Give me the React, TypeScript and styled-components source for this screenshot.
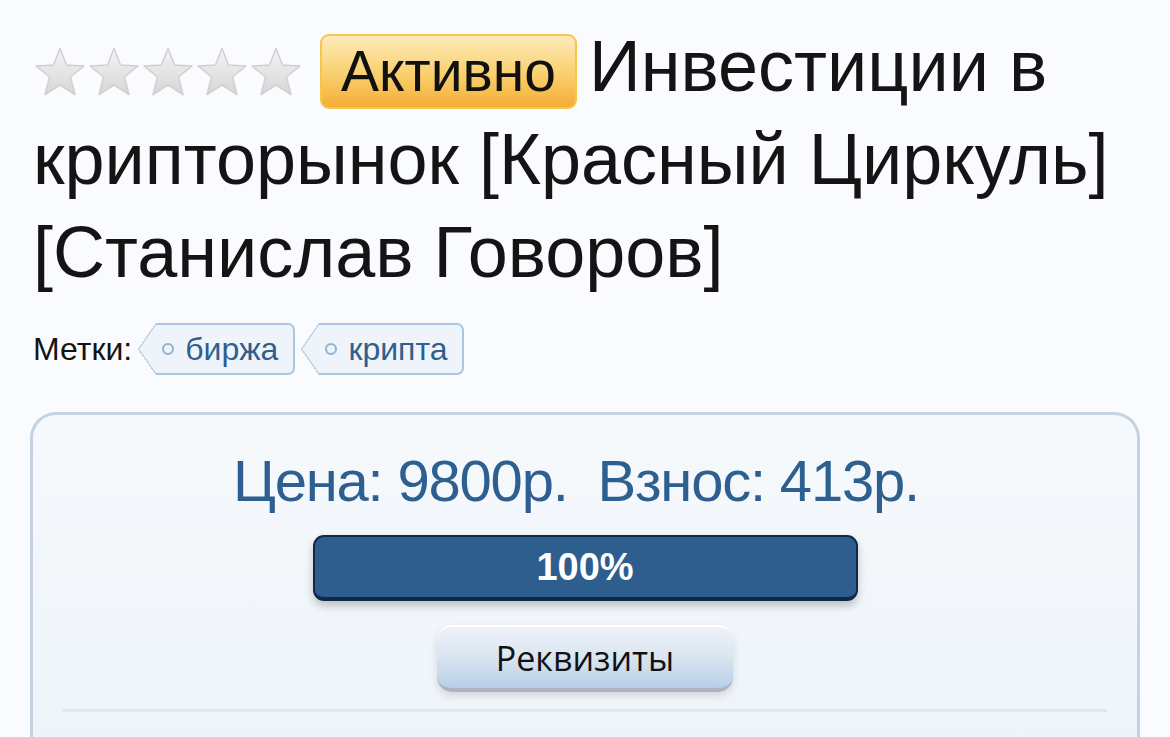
import styled, { createGlobalStyle } from 'styled-components';

const GlobalStyle = createGlobalStyle`
  html, body {
    margin: 0;
    padding: 0;
    background: #fafbfe;
  }
  body {
    font-family: 'Liberation Sans', Arial, sans-serif;
    color: #141414;
  }
`;

const Page = styled.div`
  padding: 20px 30px 0 33px;
`;

const Title = styled.h1`
  margin: 0;
  font-size: 72px;
  font-weight: normal;
  line-height: 93px;
  color: #141414;
`;

const Stars = styled.span`
  display: inline-flex;
  vertical-align: -9px;
  margin-right: 17px;
  svg {
    width: 54px;
    height: 55px;
    filter: blur(0.6px);
  }
`;

const Badge = styled.span`
  display: inline-block;
  padding: 0 19px;
  height: 71px;
  line-height: 71px;
  font-size: 57px;
  border: 2px solid #f7c54a;
  border-radius: 9px;
  background: linear-gradient(#fdebbb, #f9cf6c 55%, #f4ae35);
  color: #111;
  margin-right: 12px;
`;

const TagRow = styled.div`
  display: flex;
  align-items: center;
  gap: 5px;
  margin-top: 24px;
  font-size: 32px;
`;

const Tag = styled.span`
  position: relative;
  display: inline-flex;
  align-items: center;
  height: 48px;
  padding: 0 15px 0 6px;
  margin-left: 19px;
  border: 2px solid #a9c7e3;
  border-left: none;
  border-radius: 0 7px 7px 0;
  background: #eef4fa;
  color: #2e5f8f;
  font-size: 32px;

  &::before {
    content: '';
    position: absolute;
    left: -18px;
    top: -2px;
    width: 18px;
    height: 52px;
    background: linear-gradient(to bottom right, transparent 49%, #a9c7e3 50%, #eef4fa 56%) top / 100% 50% no-repeat,
      linear-gradient(to top right, transparent 49%, #a9c7e3 50%, #eef4fa 56%) bottom / 100% 50% no-repeat;
  }

  &::after {
    content: '';
    width: 8px;
    height: 8px;
    border: 2px solid #8fb3d4;
    border-radius: 50%;
    margin-right: 11px;
    order: -1;
  }
`;

const Card = styled.section`
  margin-top: 37px;
  margin-left: -3px;
  border: 3px solid #c4d2e1;
  border-bottom: none;
  border-radius: 26px 26px 0 0;
  background: linear-gradient(#f6f9fc, #eef4f9);
  padding: 34px 30px 40px;
  display: flex;
  flex-direction: column;
  align-items: center;
`;

const Price = styled.div`
  margin-right: 18px;
  font-size: 58px;
  line-height: 64px;
  color: #2e5f91;
  letter-spacing: -1.2px;
  white-space: pre;
`;

const Progress = styled.div`
  margin-top: 22px;
  width: 541px;
  height: 60px;
  border: 2px solid #10294a;
  border-bottom-width: 4px;
  border-radius: 11px;
  background: #2e5e8e;
  color: #fff;
  font-weight: bold;
  font-size: 38px;
  display: flex;
  align-items: center;
  justify-content: center;
  box-shadow: 0 5px 8px rgba(0, 0, 0, 0.22);
`;

const Button = styled.button`
  margin-top: 24px;
  width: 296px;
  height: 67px;
  border: none;
  border-top: 2px solid #fff;
  border-bottom: 4px solid #b3b0c0;
  border-radius: 15px;
  background: linear-gradient(#eef2f8, #dce7f2 45%, #b6cfe7);
  box-shadow: 0 4px 8px rgba(0, 0, 0, 0.12);
  font-family: 'Open Sans', 'Liberation Sans', sans-serif;
  font-size: 34px;
  color: #111;
  padding: 0;
`;

const Divider = styled.hr`
  align-self: stretch;
  margin: 17px 0 0;
  border: none;
  height: 3px;
  background: #dbe9f6;
`;

const Star = ({ id }: { id: string }) => (
  <svg viewBox="0 0 54 54">
    <defs>
      <linearGradient id={id} x1="0" y1="0" x2="0" y2="1">
        <stop offset="0" stopColor="#f4f4f4" />
        <stop offset="1" stopColor="#d6d6d6" />
      </linearGradient>
    </defs>
    <path
      d="M27 3 L33.5 19.5 L51 20.5 L37.5 31.5 L42 49 L27 39.5 L12 49 L16.5 31.5 L3 20.5 L20.5 19.5 Z"
      fill={`url(#${id})`}
      stroke="#d0d0d0"
      strokeWidth="1.5"
      strokeLinejoin="round"
    />
  </svg>
);

export default function App() {
  return (
    <>
      <GlobalStyle />
      <Page>
        <Title>
          <Stars>
            {[0, 1, 2, 3, 4].map((i) => (
              <Star key={i} id={`star${i}`} />
            ))}
          </Stars>
          <Badge>Активно</Badge>
          Инвестиции в крипторынок [Красный Циркуль] [Станислав Говоров]
        </Title>
        <TagRow>
          Метки:
          <Tag>биржа</Tag>
          <Tag>крипта</Tag>
        </TagRow>
        <Card>
          <Price>{'Цена: 9800р.  Взнос: 413р.'}</Price>
          <Progress>100%</Progress>
          <Button>Реквизиты</Button>
          <Divider />
        </Card>
      </Page>
    </>
  );
}
